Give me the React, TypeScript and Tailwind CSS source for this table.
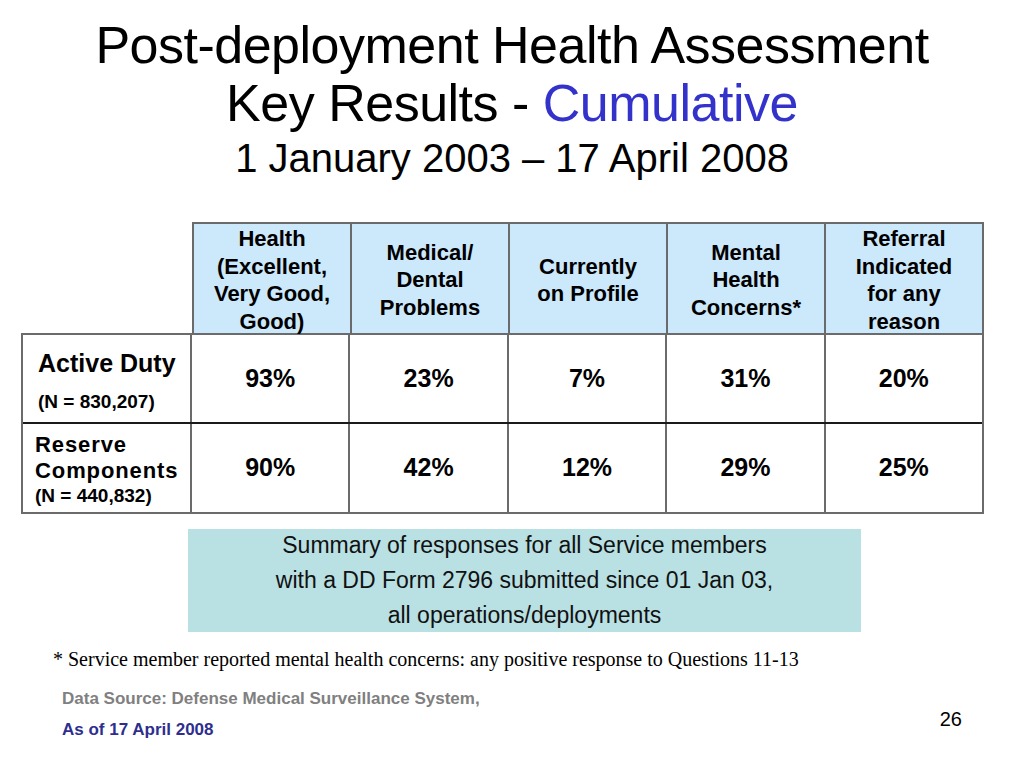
import React from "react";

const headers = [
  ["Health", "(Excellent,", "Very Good,", "Good)"],
  ["Medical/", "Dental", "Problems"],
  ["Currently", "on Profile"],
  ["Mental", "Health", "Concerns*"],
  ["Referral", "Indicated", "for any", "reason"],
];

const rows = [
  { values: ["93%", "23%", "7%", "31%", "20%"] },
  { values: ["90%", "42%", "12%", "29%", "25%"] },
];

const sans = { fontFamily: '"Liberation Sans", Arial, sans-serif' };

export default function App() {
  return (
    <div className="w-[1024px] h-[768px] bg-white overflow-hidden" style={sans}>
      {/* title */}
      <div className="flex flex-col items-center pt-[16px] text-black">
        <div className="text-[52px] leading-[58px] tracking-[-0.5px]">Post-deployment Health Assessment</div>
        <div className="text-[52px] leading-[58px] tracking-[-0.5px]">
          Key Results - <span className="text-[#3333cc]">Cumulative</span>
        </div>
        <div className="text-[40px] leading-[52px]">1 January 2003 – 17 April 2008</div>
      </div>

      {/* table */}
      <div className="ml-[21px] mt-[38px] w-[963px] text-black font-bold">
        <div className="flex h-[111px]">
          <div className="w-[171px]" />
          <div className="flex flex-1 bg-[#cce8fb] border-2 border-b-0 border-[#6b6b6b]">
            {headers.map((h, i) => (
              <div
                key={i}
                className={`flex-1 flex flex-col items-center justify-center pt-[3px] text-[22px] leading-[27.5px] ${i < 4 ? "border-r-2 border-[#6b6b6b]" : ""}`}
              >
                {h.map((l) => (
                  <span key={l}>{l}</span>
                ))}
              </div>
            ))}
          </div>
        </div>
        <div className="border-2 border-[#6b6b6b]">
          <div className="flex h-[89px] border-b-2 border-[#1a1a1a]">
            <div className="w-[169px] border-r-2 border-[#6b6b6b] flex flex-col pl-[15px]">
              <span className="text-[25px] leading-[28px] mt-[14px]">Active Duty</span>
              <span className="text-[19px] leading-[22px] mt-[14px]">(N = 830,207)</span>
            </div>
            {rows[0].values.map((v, i) => (
              <div
                key={i}
                className={`flex-1 flex items-center justify-center text-[25px] ${i < 4 ? "border-r-2 border-[#6b6b6b]" : ""}`}
              >
                {v}
              </div>
            ))}
          </div>
          <div className="flex h-[88px]">
            <div className="w-[169px] border-r-2 border-[#6b6b6b] flex flex-col pl-[12px]">
              <span className="text-[22px] leading-[26px] mt-[8px] tracking-[0.9px]">
                Reserve
                <br />
                Components
              </span>
              <span className="text-[19px] leading-[22px] mt-[1px]">(N = 440,832)</span>
            </div>
            {rows[1].values.map((v, i) => (
              <div
                key={i}
                className={`flex-1 flex items-center justify-center text-[25px] ${i < 4 ? "border-r-2 border-[#6b6b6b]" : ""}`}
              >
                {v}
              </div>
            ))}
          </div>
        </div>
      </div>

      {/* summary box */}
      <div className="ml-[188px] mt-[15px] w-[673px] h-[103px] bg-[#b9e0e3] flex flex-col items-center justify-center text-[23px] leading-[35px] text-[#111]">
        <span>Summary of responses for all Service members</span>
        <span>with a DD Form 2796 submitted since 01 Jan 03,</span>
        <span>all operations/deployments</span>
      </div>

      {/* footnote */}
      <div
        className="ml-[53px] mt-[15px] text-[20px] leading-[24px] text-black"
        style={{ fontFamily: '"Liberation Serif", "Times New Roman", serif' }}
      >
        * Service member reported mental health concerns: any positive response to Questions 11-13
      </div>

      <div className="flex items-start justify-between pl-[62px] pr-[62px] mt-[17px]">
        <div className="flex flex-col font-bold text-[17px]">
          <span className="text-[#808080] leading-[22px]">Data Source: Defense Medical Surveillance System,</span>
          <span className="text-[#2e2e8f] leading-[22px] mt-[9px]">As of 17 April 2008</span>
        </div>
        <div className="text-[20px] leading-[24px] mt-[19px] text-black">26</div>
      </div>
    </div>
  );
}
